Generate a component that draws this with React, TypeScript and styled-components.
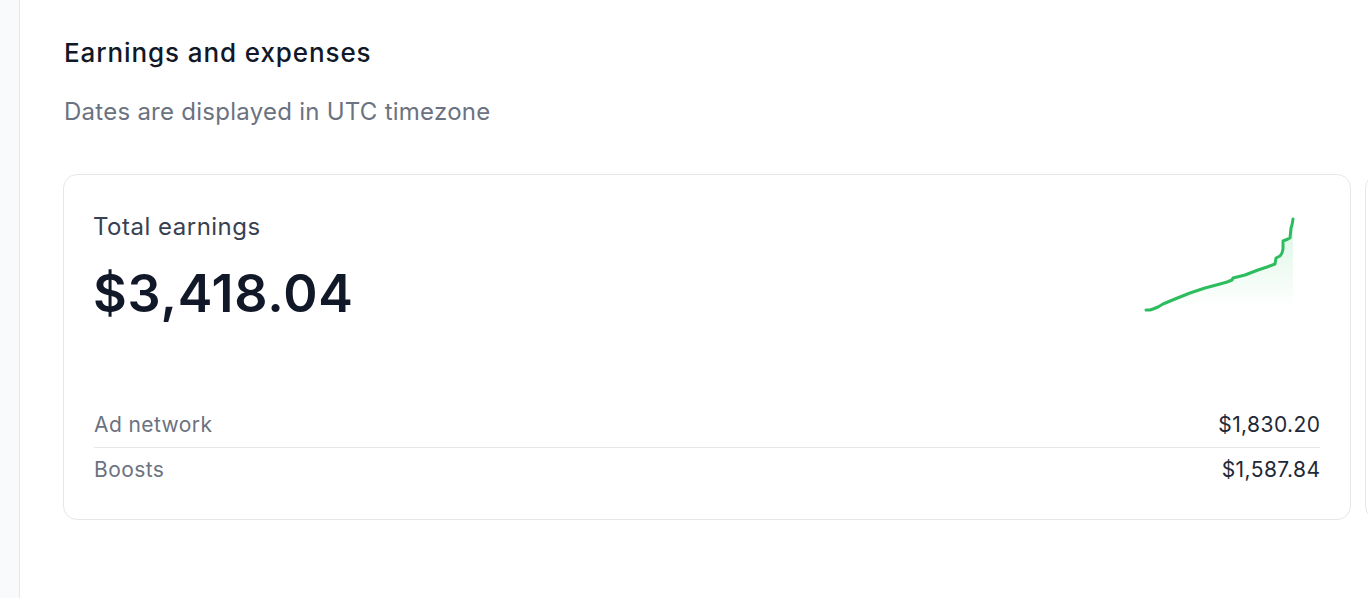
import React from 'react';
import styled, { createGlobalStyle } from 'styled-components';

const GlobalStyle = createGlobalStyle`
  html, body {
    margin: 0;
    padding: 0;
    background: #ffffff;
    font-family: Inter, "Noto Sans", "Liberation Sans", sans-serif;
    -webkit-font-smoothing: antialiased;
  }
`;

const Page = styled.div`
  display: flex;
  width: 1368px;
  height: 598px;
  overflow: hidden;
`;

const Sidebar = styled.div`
  flex: 0 0 19px;
  background: #f9fafb;
  border-right: 1px solid #e5e7eb;
`;

const Main = styled.main`
  flex: 1;
  min-width: 0;
  padding: 35px 0 0 43px;
  overflow: hidden;
`;

const Title = styled.h2`
  margin: 0 0 0 1px;
  font-size: 26px;
  line-height: 36px;
  font-weight: 500;
  letter-spacing: 0.9px;
  color: #111827;
`;

const Subtitle = styled.p`
  margin: 23px 0 0 1px;
  font-size: 24px;
  line-height: 36px;
  letter-spacing: 0.26px;
  color: #6b7280;
`;

const Cards = styled.div`
  display: flex;
  gap: 14px;
  margin-top: 44px;
`;

const Card = styled.section`
  flex: 0 0 1288px;
  box-sizing: border-box;
  height: 346px;
  border: 1px solid #e5e7eb;
  border-radius: 14px;
  padding: 34px 30px 26px 29px;
  background: #fff;
`;

const Top = styled.div`
  display: flex;
  justify-content: space-between;
  align-items: flex-start;
`;

const Label = styled.div`
  font-size: 24px;
  line-height: 36px;
  letter-spacing: 0.5px;
  color: #374151;
`;

const Amount = styled.div`
  margin-top: 23px;
  font-size: 52px;
  line-height: 52px;
  font-weight: 600;
  color: #111827;
  letter-spacing: 0.8px;
`;

const Spark = styled.svg`
  margin: 2px 20px 0 0;
`;

const Breakdown = styled.div`
  margin-top: 83px;
  padding-left: 1px;
`;

const Row = styled.div`
  display: flex;
  justify-content: space-between;
  padding: 10px 0;
  font-size: 21px;
  line-height: 24px;
  letter-spacing: 0.42px;
  & + & {
    border-top: 1px solid #e5e7eb;
  }
`;

const RowName = styled.span`
  color: #6b7280;
`;

const RowValue = styled.span`
  color: #1f2937;
  margin-right: -0.4px;
`;

const points: [number, number][] = [
  [6, 99], [10, 99], [13, 98], [18, 96], [23, 93], [35, 88], [50, 82], [65, 77],
  [80, 73], [87, 71], [92, 69], [93, 67], [105, 64], [118, 59], [127, 56], [135, 53],
  [136, 47], [140, 45], [142, 42], [143, 38], [143, 30], [148, 28], [150, 27], [151, 17],
  [152, 14], [153, 8],
];

const linePath = points.map(([x, y], i) => `${i === 0 ? 'M' : 'L'}${x} ${y}`).join(' ');
const areaPath = `${linePath} L153 93 L6 93 Z`;

const Sparkline = () => (
  <Spark width="160" height="105" viewBox="0 0 160 105">
    <defs>
      <linearGradient id="sparkFill" x1="0" y1="0" x2="0" y2="1">
        <stop offset="0" stopColor="#22c55e" stopOpacity="0.16" />
        <stop offset="1" stopColor="#22c55e" stopOpacity="0" />
      </linearGradient>
    </defs>
    <path d={areaPath} fill="url(#sparkFill)" />
    <path d={linePath} fill="none" stroke="#2dbd5f" strokeWidth="3" strokeLinejoin="round" strokeLinecap="round" />
  </Spark>
);

const rows = [
  { name: 'Ad network', value: '$1,830.20' },
  { name: 'Boosts', value: '$1,587.84' },
];

export default function App() {
  return (
    <>
      <GlobalStyle />
      <Page>
        <Sidebar />
        <Main>
          <Title>Earnings and expenses</Title>
          <Subtitle>Dates are displayed in UTC timezone</Subtitle>
          <Cards>
            <Card>
              <Top>
                <div>
                  <Label>Total earnings</Label>
                  <Amount>$3,418.04</Amount>
                </div>
                <Sparkline />
              </Top>
              <Breakdown>
                {rows.map((r) => (
                  <Row key={r.name}>
                    <RowName>{r.name}</RowName>
                    <RowValue>{r.value}</RowValue>
                  </Row>
                ))}
              </Breakdown>
            </Card>
            <Card />
          </Cards>
        </Main>
      </Page>
    </>
  );
}
